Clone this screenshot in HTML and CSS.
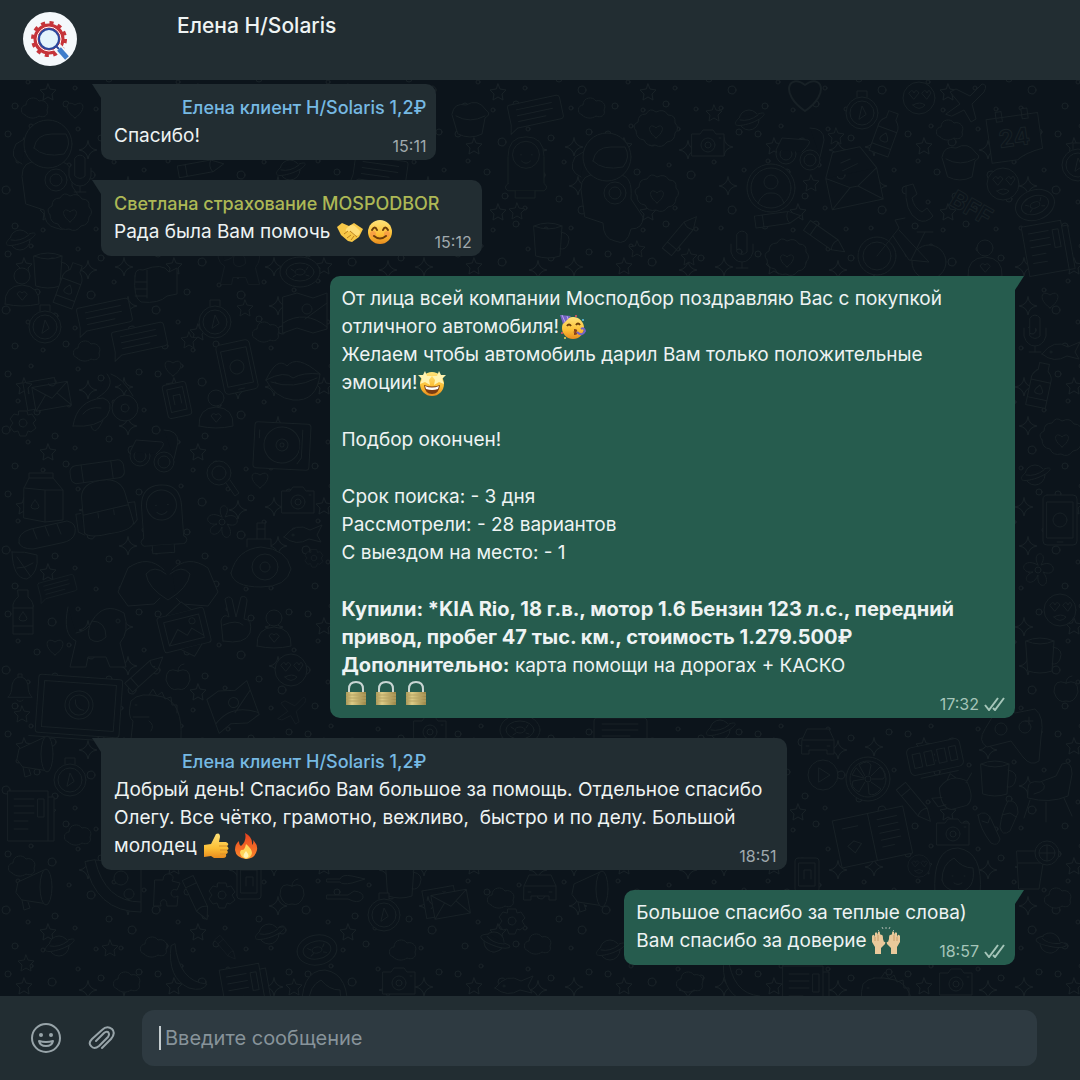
FILE: index.html
```html
<!DOCTYPE html>
<html lang="ru">
<head>
<meta charset="utf-8">
<meta name="viewport" content="width=device-width, initial-scale=1">
<title>Елена H/Solaris</title>
<link rel="stylesheet" href="styles.css">
</head>
<body>
<svg class="defs" aria-hidden="true">
  <defs>
    <!-- wallpaper doodles, each centred on 0,0 -->
    <g id="star"><path d="M0-8 2-3 8-2 4 2 5 8 0 5-5 8-4 2-8-2-2-3Z"/></g>
    <g id="spark"><path d="M0-9Q1-1 9 0 1 1 0 9-1 1-9 0-1-1 0-9Z"/></g>
    <g id="cloud"><path d="M-10 7C-16 5-14-3-9-3-9-11 1-12 4-7 10-9 15-3 12 2 14 8 8 10 4 8 0 11-6 11-10 7Z"/></g>
    <g id="heart"><path d="M0 8C-13-1-8-11 0-5 8-11 13-1 0 8Z"/></g>
    <g id="planet"><circle r="10"/><path d="M-9-3C-20 7-10 7 2 3 16-2 20-10 9-6M-9 0Q0 2 9-5"/></g>
    <g id="chat"><path d="M-24-12H24Q27-12 27-9V9Q27 12 24 12H-20L-28 17-26 8V-9Q-26-12-24-12ZM-18-6H18M-18 0H18M-18 6H10"/></g>
    <g id="face"><circle r="16"/><path d="M-10-5Q-7-10-5-5-3-10 0-5L-5 1ZM3-5Q6-10 8-5 10-10 12-5L8 1ZM-6 7Q1 3 6 7 0 14-6 7Z"/></g>
    <g id="camera"><path d="M-16-9H-8L-5-13H5L8-9H16V13H-16Z"/><circle cy="2" r="7"/><circle cy="2" r="3"/><path d="M11-5h2"/></g>
    <g id="cookie"><path d="M-20 0q-5-6 2-9 0-8 8-8 4-7 10-2 8-4 12 3 8 0 7 8 5 5 0 10 0 8-8 9-5 7-12 3-8 2-11-5-8-1-8-9Z"/><path d="M0 7C-11-1-6-9 0-3 6-9 11-1 0 7Z"/></g>
    <g id="gear"><path d="M-4-12H4L5-8 9-9 13-3 10 0 13 5 8 9 5 8 3 13H-3L-5 8-9 9-13 4-10 0-13-4-9-9-5-8Z"/><circle r="4"/></g>
    <g id="flower"><path d="M0-5C-8-20 12-20 3-5 18-12 20 8 5 2 16 16-2 22 0 5-6 20-20 8-5 2-20 4-16-14 0-5Z"/><circle r="3"/></g>
    <g id="bino"><circle cx="-12" cy="6" r="10"/><circle cx="12" cy="12" r="10"/><circle cx="-12" cy="6" r="6"/><circle cx="12" cy="12" r="6"/><path d="M-22 2-16-10 10-8Q15-6 4 4M12-20Q26-20 26-8L22 9"/></g>
    <g id="watch"><path d="M-5-16V-22H5V-16"/><circle r="16"/><circle r="12"/><path d="M-3 6 0-7 4 1Z"/></g>
    <g id="bottle"><path d="M-5-22H5V-15Q11-10 10-4V22H-10V-4Q-11-10-5-15ZM-10-4H10M-10 14H10"/><path d="M0 0Q8 9 0 9-8 9 0 0Z"/></g>
    <g id="plane"><path d="M-20 12-6 2-16-10-10-13 4-6 16-18Q22-18 18-10L6 2 10 17 5 20-2 8-14 14Z"/></g>
    <g id="calendar"><path d="M-26-16H26V20Q8 22 0 28H-26ZM-16-22h6v10h-6ZM10-22h6v10h-6Z"/><text class="doodle-text" x="-16" y="14">24</text></g>
    <g id="astro"><path d="M-26 6Q-40 0-32-14L-22-20"/><path d="M-26 18Q-26 2-10 4H12Q26 4 24 28L36 46Q36 58 24 58 20 76 8 70-4 68-4 52L-22 46Z"/><circle cy="-14" r="24"/><path d="M-14-10Q-12-24 4-24H18Q24-14 16-4-4 0-14-10Z"/><circle cx="8" cy="22" r="11"/><circle cx="8" cy="22" r="6"/></g>
    <g id="person-circle"><circle r="24"/><circle r="20"/><circle cy="-6" r="7"/><path d="M-13 15Q-8 4 0 5 9 4 13 15"/></g>
    <g id="mail"><path d="M-22-14H10V-8M-22-14V14H-14"/><path d="M-14-8H22V16H-14ZM-14-8 4 6 22-8M-14 16-2 2M22 16 10 2"/></g>
    <g id="letter"><path d="M-26-4-14-28H14L26-4V28H-26ZM-26-4-4 10H4L26-4M-26 28-4 10M26 28 4 10M-8-16 2-18M-8-8 8-12"/></g>
    <g id="muffin"><path d="M-18-6Q-16-18-4-15 8-22 16-10 22-6 15-2L12 14Q0 20-12 14ZM-14-4Q0 4 15-4"/></g>
    <g id="handset"><path d="M-12-16-5-18-1-8-6-4Q-4 6 4 10L9 6 15 14Q8 22 0 18-14 10-12-16Z"/></g>
    <g id="donut"><ellipse rx="20" ry="15"/><ellipse rx="14" ry="9"/><ellipse rx="5" ry="3"/><path d="M-9-3l3 2M8-5l-2 3M9 4l-3-1M-7 5l3-2"/></g>
    <g id="pencil"><path d="M-22-6H12L24 0 12 6H-22ZM-14-6V6M12-6Q8 0 12 6"/></g>
    <g id="mic"><path d="M-5-12Q0-18 5-12V6Q0 11-5 6ZM-11-2V6Q-8 16 0 16 8 16 11 6V-2M0 16V22M-6 22H6"/></g>
    <g id="bike"><circle cx="-26" cy="10" r="19"/><circle cx="26" cy="16" r="17"/><circle cx="-26" cy="10" r="14"/><path d="M-26 10-4-18-8-26 2-28M-4-16 26 16 6 14-10-10M14-14H30M22-14 8 14"/></g>
    <g id="news"><path d="M-22-24H18V-18H24V26H-22ZM18-18V26M-16-16H4M-16-9H4M-16-2H4M-16 6H-2M-16 14H-2M8-16h6v18H8Z"/></g>
    <g id="mug"><path d="M-14-14Q0-20 14-14L12 16Q0 20-12 16ZM-14-14Q0-8 14-14M13-8Q24-6 20 4 18 10 12 9"/></g>
    <g id="map"><path d="M-22-16-8-20 8-15 22-20V16L8 20-8 15-22 20ZM-22 10Q0-4 22 14M0 6 22-10"/><circle cx="2" cy="-4" r="5"/></g>
    <g id="tablet"><rect x="-17" y="-25" width="34" height="50" rx="4"/><path d="M-13-18H13V18H-13ZM-3 22H3"/><circle r="7"/></g>
    <g id="phone"><rect x="-12" y="-17" width="24" height="34" rx="3"/><path d="M-8-12H8V11H-8ZM-3 4V-5H4V4"/></g>
    <g id="lips"><path d="M-27 2Q-16-22-6-12 4-24 27-4 24 24 0 22-18 20-27 2ZM-27 2Q-8-8 0 0 10-6 27-4M-22 4Q0 12 24 0"/></g>
    <g id="ufo"><path d="M-20 14Q-16-12 10-14 22-10 14 4 4 16-20 14ZM-10 2Q-4-6 8-4M-2 14Q2 26 10 8"/><circle cx="32" cy="-4" r="13"/><circle cx="32" cy="-4" r="4"/><path d="M4-14Q24-26 14-38M40-16Q30-34 18-38"/></g>
    <g id="person"><circle cy="-14" r="8"/><path d="M-17 14Q-18-4 0-5 18-4 17 14Q0 18-17 14ZM0 10-5 4Q-3 0 0 3 3 0 5 4Z"/></g>
    <g id="deck"><rect x="-28" y="-22" width="56" height="46" rx="3"/><circle r="18"/><circle r="6"/><circle r="2"/><path d="M20-16V12L16 18M-23-14v8"/></g>
    <g id="lens"><circle r="12"/><circle r="7"/><path d="M7 10 16 23 20 20 11 7"/></g>
    <g id="milk"><path d="M-19-10-14-20H10L20-8V22L2 24-19 20ZM-19-10 2-8 20-8M2-8V24M-14-20V-25H10V-20"/><path d="M-8 2Q0 11-8 11-16 11-8 2Z"/></g>
    <g id="bag"><path d="M-22-12Q-20-26 0-26 20-26 22-8L26 20Q24 28 0 28-20 30-24 24ZM-25 4H-30V22L-24 26M23 0H30V18L26 22M-23 6 23 2M-8 6v5M8 5v5"/><rect x="-30" y="-44" width="54" height="18" rx="6"/><path d="M-18-44V-26M12-44V-26"/></g>
    <g id="girl"><path d="M-20 24V-6Q-20-28 0-28 20-28 20-6V24Q26 28 20 32H-20Q-26 28-20 24Z"/><circle cy="-8" r="15"/><path d="M-6-8h1M6-8h1M-5-1Q0 4 5-1M-12 32V40H10V32"/></g>
    <g id="dial"><path d="M-30 10Q-24-14 0-16 26-14 30 6 26 24 0 24-28 24-30 10ZM-14-16V-24H10V-16M-4-24V-40H4V-24M-4-34H4"/><circle cx="4" cy="4" r="13"/><circle cx="4" cy="4" r="5"/></g>
    <g id="fish"><path d="M-18 4Q-6-12 8-3L20-8 15 2 19 9 7 6Q-6 14-18 4Z"/><circle cx="-9" cy="2" r="1"/></g>
    <g id="bread"><path d="M-28 8Q-30-2-16-6L20-14Q30-12 28-2 26 6 14 8L-14 14Q-26 14-28 8ZM-14-6-10 4M-2-9 2 1M10-11 14-1"/></g>
    <g id="leaf"><path d="M-13-13Q0-14 12-10 14 8 2 14-12 14-13-13ZM-8-8 6 12M0 2 8-2M0 2-8 3"/></g>
    <g id="hands"><path d="M-2-8Q-14-18-22-8-20 6 0 18 20 6 22-8 14-18 2-8M-4-12Q-20-28-40-14L-50 10-40 24-14 22-8 16M4-12Q20-28 40-14L50 10 40 24 14 22 8 16"/></g>
    <g id="dog"><path d="M-30-28Q-36 0-22 6L-28 32H-12L-10 22H8L12 32H28L22 8Q32-4 26-22 6-34-6-14-10-4-22-2"/><path d="M-6-14Q8-14 8 2 0 10-8 4-12-4-6-14Z"/><circle cx="20" cy="-14" r="2"/></g>
    <g id="picture"><rect x="-24" y="-18" width="48" height="36" rx="3"/><path d="M-18-12H18V12H-18ZM-18 12-6-2 2 6 8 0 18 10M-14-18 4-28 12-18M-8 18 4 28 14 18"/><circle cx="10" cy="-7" r="3"/></g>
    <g id="peace"><path d="M-14 18-16-2Q-14-10-8-6L-12-24Q-8-28-5-24L-1-6 4-26Q10-28 10-22L7-4Q16-4 13 10 8 22-14 18ZM-14 2Q0-4 6 2"/></g>
    <g id="laptop"><rect x="-42" y="-28" width="84" height="58" rx="3"/><path d="M-36-22H36V24H-36ZM-48 34H48"/><circle r="14"/><circle r="10"/><path d="M-4-5Q-4 4 5 5"/></g>
    <g id="dino"><path d="M-22 26-20 8Q-26 4-22-12-14-22 10-16 30-10 28 26M-20 4H-4M-18-8h2M-4-18l4-6 4 7 5-4 3 7 6-2 1 8 5 0 0 8M-4 8Q2 12-2 18"/></g>
    <g id="apple"><path d="M0-7Q12-12 12 2 8 14 0 11-8 14-12 2-12-12 0-7ZM0-7Q0-13 6-14"/></g>
    <g id="bell"><path d="M-12 9Q-8 6-8-3-6-11 0-11 6-11 8-3 8 6 12 9ZM-3 12Q0 15 3 12M-2-11V-14H2V-11"/></g>
    <g id="car"><path d="M-16-2-11-13H11L16-2V12H9V8H-9V12H-16ZM-16-2H16M-12 4h3M9 4h3"/></g>
    <g id="play"><circle r="15"/><path d="M-4-7 7 0-4 7Z"/></g>
    <g id="citrus"><circle r="22"/><circle r="18"/><circle r="3"/><path d="M-3-3-9-14Q0-20 3-14L1-4M3-3 12-12Q20-4 15 0L4 0M3 3 13 10Q6 18 1 15L0 4M-3 3-9 13Q-18 8-15 2L-4 0M-4-1-16-4-12-11Z"/></g>
    <g id="clock"><rect x="-27" y="-14" width="54" height="28" rx="5"/><path d="M-18 18H20M-22-7h8v14h-8ZM-10-7h8v14h-8ZM3-7h8v14H3ZM15-7h7v14h-7ZM0-3v1M0 3v1"/></g>
    <g id="pad"><path d="M-20-24Q-10-30 0-24L20-28Q30-20 26 0L24 24Q16 30 8 20L-4 4-28 10Q-38 4-30-8Z"/><circle cx="-14" cy="-8" r="6"/><circle cx="10" cy="-10" r="6"/><path d="M14-20v8M10-16h8"/></g>
    <g id="pot"><path d="M-14-8Q0-20 14-8 18 12 8 16H-8Q-18 12-14-8ZM-14 2-24 0-20 10-12 10M13-6 21-14M-4-14 0-19 4-14"/></g>
    <g id="chair"><path d="M-22-2Q-22-10-10-8L6-14 12-26Q22-30 22-16L18 6Q0 14-22 8ZM-20 10-26 28M-4 12V32M14 8 22 26M-8-8Q0 0-16 4"/></g>
    <g id="book"><path d="M-36-22H0V26H-36ZM0-22H36V26H0ZM-28-12H-12M8-14H28M8-7H28M8 0H28M8 7H28M8 14H20"/><path d="M-20 14-26 6-19 2-12 6Z"/></g>
    <g id="flips"><path d="M-20-8Q-12-14-7-4L2 16Q0 24-7 20-18 6-20-8ZM-16-2-10 0-8-6M10-22Q20-24 20-10L12 8Q4 14 2 4 4-12 10-22ZM4-8 12-10 18-6"/></g>
    <g id="drink"><path d="M-16-14H12L6 24H-14ZM-15-2H10"/><circle cx="14" cy="-12" r="12"/><circle cx="14" cy="-12" r="8"/><path d="M6-12H22M14-20V-4"/></g>
    <g id="lady"><path d="M-23 22Q-26-24 0-24 26-20 22 22M-16 8Q-16-8-4-14 4-4 15-4 18 18 0 20-14 18-16 8ZM-6 4h1M6 4h1M-4 11Q0 14 4 11"/></g>
    <g id="horn"><path d="M-18 4-16-6 10-18 14 16-12 12ZM-12 12-10 22-4 20-6 14"/><ellipse cx="12" cy="-1" rx="6" ry="18"/></g>
    <g id="pizza"><path d="M-30-26Q-20 24 26 24V14Q-10 14-20-28ZM-20-28 26-24V14"/><circle cx="6" cy="-10" r="7"/><circle cx="14" cy="6" r="5"/></g>
    <g id="puzzle"><path d="M-12-12H-4Q-4-19 3-18 8-16 5-11L13-9 10-2Q4-4 4 2 6 7 11 4L10 14H0Q0 6-5 8-8 10-6 14H-13Z"/></g>
    <g id="fork"><path d="M-19-9H-6Q-4-14 6-12L19-9 6-5Q-4-3-6-6H-19ZM-19 7H2L8 3Q18 4 17 10 14 15 7 13L2 11H-19Z"/></g>
    <g id="banana"><path d="M-14-24Q-10 14 18 16 14 24 0 20-22 10-18-22Z"/></g>
    <g id="fist"><path d="M-20-8Q-20-16-12-14 8-22 14-12L22-16V10L12 12Q4 20-14 18-22 14-20-8ZM-20-2H-8M-20 5H-8M-20 12H-8M-8-14V14"/></g>

    <pattern id="specks" width="150" height="120" patternUnits="userSpaceOnUse">
      <g class="doodle">
        <circle cx="8" cy="14" r="3"/><circle cx="31" cy="6" r="2"/><circle cx="52" cy="22" r="4"/><circle cx="78" cy="9" r="2"/><circle cx="101" cy="18" r="3"/><circle cx="139" cy="12" r="3"/>
        <circle cx="18" cy="41" r="2"/><circle cx="37" cy="52" r="3"/><circle cx="69" cy="45" r="2"/><circle cx="91" cy="55" r="4"/><circle cx="114" cy="42" r="2"/><circle cx="144" cy="50" r="2"/>
        <circle cx="6" cy="70" r="4"/><circle cx="28" cy="82" r="2"/><circle cx="55" cy="76" r="3"/><circle cx="75" cy="88" r="2"/><circle cx="109" cy="79" r="3"/><circle cx="132" cy="90" r="4"/>
        <circle cx="15" cy="106" r="3"/><circle cx="43" cy="110" r="2"/><circle cx="66" cy="104" r="3"/><circle cx="96" cy="109" r="2"/><circle cx="121" cy="108" r="2"/>
        <use href="#spark" x="124" y="27"/><use href="#star" x="48" y="92"/><use href="#spark" x="88" y="30"/><use href="#star" x="24" y="26"/><use href="#spark" x="128" y="66"/>
      </g>
    </pattern>

    <g id="ticks"><path d="M1 8 5 13 14 1M9 11 11 13 20 1"/></g>
    <linearGradient id="skin" x1="0" y1="0" x2="0" y2="1"><stop offset="0" stop-color="#ffe37a"/><stop offset=".6" stop-color="#fcbf35"/><stop offset="1" stop-color="#e88b1e"/></linearGradient>
    <linearGradient id="brass" x1="0" x2="1"><stop offset="0" stop-color="#a89658"/><stop offset=".3" stop-color="#dccb86"/><stop offset="1" stop-color="#9b8648"/></linearGradient>
    <linearGradient id="flame" x1="0" y1="0" x2="0" y2="1"><stop offset="0" stop-color="#e8401f"/><stop offset="1" stop-color="#fb8a2c"/></linearGradient>
    <g id="lock"><path d="M7 13V9Q7 2 14 2T21 9V13" fill="none" stroke="#c9d6d4" stroke-width="2"/><path d="M4 12H24V25H4Z" fill="url(#brass)"/><path d="M4 15H24M4 18H24M4 21H24" stroke="#b7a465"/></g>
  </defs>
</svg>

<header class="header">
  <svg class="avatar" viewBox="0 0 54 54" role="img" aria-label="Логотип">
    <circle cx="27" cy="27" r="27" fill="#f4f8fb"/>
    <circle cx="26" cy="27" r="13" fill="none" stroke="#c6343a" stroke-width="5"/>
    <circle cx="26" cy="27" r="16" fill="none" stroke="#c6343a" stroke-width="4" stroke-dasharray="4 4.38"/>
    <path d="M34 35 43 45" stroke="#f4f8fb" stroke-width="9"/>
    <circle cx="26" cy="27" r="10" fill="#e4f3fc" stroke="#2b479d" stroke-width="2"/>
    <circle cx="26" cy="27" r="12" fill="none" stroke="#fff"/>
    <path d="M33 34 36 37" stroke="#2b479d" stroke-width="2"/>
    <path d="M36 37 44 46" stroke="#3f7dcb" stroke-width="5"/>
  </svg>
  <h1 class="title">Елена H/Solaris</h1>
</header>

<main class="chat">
  <svg class="wallpaper" viewBox="0 80 1080 916" preserveAspectRatio="xMidYMid slice" aria-hidden="true">
    <rect y="80" width="1080" height="916" fill="url(#specks)"/>
    <g class="doodle">
      <use href="#cloud" x="35" y="108"/><use href="#astro" x="48" y="158"/><use href="#cookie" x="70" y="215"/><use href="#planet" x="20" y="240"/><use href="#mug" x="48" y="270"/>
      <use href="#heart" x="75" y="110"/><use href="#mic" x="80" y="170"/>
      <use href="#pencil" transform="translate(200 168) rotate(-10)"/><use href="#planet" x="290" y="170"/><use href="#chat" transform="translate(380 170) rotate(8)"/><use href="#fist" x="155" y="284"/><use href="#person" x="22" y="290"/><use href="#dog" transform="translate(240 262) scale(.7)"/><use href="#donut" x="300" y="272"/><use href="#bottle" transform="translate(70 285) rotate(20)"/>
      <use href="#chat" transform="translate(535 112) rotate(-12)"/><use href="#cloud" x="592" y="108"/><use href="#cookie" x="656" y="131"/><use href="#camera" x="708" y="143"/><use href="#planet" x="749" y="120"/><use href="#heart" transform="translate(805 95) scale(2)"/><use href="#bino" x="798" y="148"/><use href="#watch" x="862" y="113"/><use href="#bottle" transform="translate(886 133) rotate(20)"/><use href="#face" x="919" y="98"/><use href="#plane" x="966" y="102"/><use href="#calendar" transform="translate(1014 132) rotate(-8)"/><use href="#cloud" x="950" y="130"/>
      <use href="#star" x="714" y="113"/><use href="#star" x="836" y="136"/><use href="#star" x="811" y="183"/><use href="#star" x="517" y="211"/><use href="#star" x="689" y="257"/><use href="#star" x="637" y="249"/>
      <use href="#muffin" x="470" y="120"/><use href="#girl" transform="translate(526 162) scale(.9)"/><use href="#astro" x="607" y="171"/><use href="#cookie" x="657" y="196"/><use href="#person-circle" x="771" y="188"/><use href="#letter" transform="translate(852 177) rotate(-12)"/><use href="#muffin" x="960" y="163"/><use href="#face" x="1003" y="184"/><use href="#handset" x="918" y="202"/><use href="#donut" transform="translate(1035 205) rotate(-20)"/><text class="doodle-text" transform="translate(948 204) rotate(30)">BFF</text>
      <use href="#pencil" transform="translate(777 219) rotate(-8)"/><use href="#pencil" transform="translate(681 235) rotate(-50)"/><use href="#pencil" transform="translate(825 238) rotate(35)"/><use href="#mic" x="742" y="246"/><use href="#bike" x="903" y="246"/><use href="#news" transform="translate(1047 247) rotate(-10)"/><use href="#mug" x="548" y="240"/><use href="#person" x="985" y="262"/><use href="#cookie" x="787" y="260"/><use href="#watch" x="1078" y="165"/>

      <use href="#watch" x="45" y="327"/><use href="#chat" transform="translate(104 315) rotate(-12)"/><use href="#chat" transform="translate(139 339) rotate(-12)"/><use href="#watch" x="215" y="322"/><use href="#map" x="305" y="313"/><use href="#cloud" x="266" y="332"/><use href="#cloud" x="87" y="351"/><use href="#tablet" transform="translate(237 367) rotate(-12)"/><use href="#lips" x="293" y="378"/><use href="#mail" transform="translate(47 393) rotate(-10)"/><use href="#ufo" x="93" y="412"/><use href="#phone" transform="translate(177 400) rotate(-12)"/><use href="#person" x="216" y="412"/><use href="#gear" x="23" y="423"/><use href="#bino" x="152" y="450"/><use href="#deck" transform="translate(282 445) rotate(3)"/><use href="#lens" x="219" y="473"/><use href="#milk" x="43" y="498"/><use href="#bag" transform="translate(105 506) rotate(-8)"/><use href="#girl" transform="translate(162 513) rotate(-4)"/><use href="#flower" x="222" y="522"/><use href="#dial" x="261" y="563"/><use href="#fish" x="302" y="533"/><use href="#bread" x="47" y="535"/><use href="#leaf" x="25" y="565"/><use href="#hands" x="168" y="582"/><use href="#chat" transform="translate(57 587) rotate(-15) scale(.7)"/><use href="#bottle" x="23" y="612"/><use href="#dog" x="98" y="635"/><use href="#picture" transform="translate(184 630) rotate(-14)"/><use href="#peace" x="237" y="623"/><use href="#person" x="274" y="632"/><use href="#face" x="291" y="670"/><use href="#laptop" transform="translate(79 705) rotate(4)"/><use href="#dino" x="153" y="713"/><use href="#apple" x="178" y="678"/><use href="#pencil" transform="translate(145 673) rotate(-42)"/><use href="#map" transform="translate(233 707) rotate(-20)"/><use href="#bell" x="20" y="688"/><use href="#plane" transform="translate(292 710) scale(.7)"/><use href="#star" x="22" y="714"/><use href="#star" x="189" y="340"/><use href="#star" x="245" y="308"/><use href="#heart" x="260" y="480"/><use href="#heart" x="173" y="368"/><use href="#heart" x="55" y="647"/><use href="#camera" x="298" y="500"/><use href="#gear" transform="translate(314 558) scale(.7)"/>

      <use href="#heart" x="1050" y="300"/><use href="#mic" x="1035" y="330"/><use href="#fish" x="1060" y="350"/><use href="#bottle" transform="translate(1040 385) rotate(12)"/><use href="#cookie" x="1062" y="440"/><use href="#planet" x="1035" y="475"/><use href="#tablet" x="1060" y="520"/><use href="#flower" x="1038" y="570"/><use href="#face" x="1060" y="610"/><use href="#mug" x="1040" y="655"/><use href="#apple" x="1066" y="690"/>

      <use href="#horn" x="35" y="755"/><use href="#watch" x="70" y="780"/><use href="#news" x="30" y="815"/><use href="#cloud" x="78" y="835"/><use href="#cloud" x="22" y="866"/><use href="#camera" x="430" y="730"/><use href="#donut" x="520" y="730"/><use href="#chat" x="620" y="730"/><use href="#planet" x="720" y="730"/>
      <use href="#car" x="818" y="742"/><use href="#play" x="823" y="775"/><use href="#citrus" x="868" y="779"/><use href="#clock" transform="translate(935 757) rotate(-12)"/><use href="#pad" x="1015" y="737"/><use href="#pot" transform="translate(955 792) rotate(-15)"/><use href="#mug" x="995" y="778"/><use href="#chair" x="1050" y="790"/><use href="#book" transform="translate(872 835) rotate(-12)"/><use href="#pencil" transform="translate(915 803) rotate(50)"/><use href="#camera" x="953" y="832"/><use href="#flips" x="998" y="823"/><use href="#drink" x="1033" y="865"/><use href="#face" transform="translate(919 866) scale(.7)"/><use href="#lady" x="958" y="872"/><use href="#phone" x="807" y="875"/><use href="#cloud" x="1058" y="898"/><use href="#planet" transform="translate(1050 943) rotate(30)"/><use href="#news" x="805" y="990"/><use href="#camera" x="956" y="982"/><use href="#dino" x="885" y="996"/>
      <use href="#horn" x="34" y="888"/><use href="#pizza" x="115" y="888"/><use href="#puzzle" x="167" y="892"/><use href="#pencil" transform="translate(197 898) rotate(65)"/><use href="#gear" x="222" y="895"/><use href="#phone" x="249" y="882"/><use href="#apple" x="292" y="893"/><use href="#fork" x="346" y="888"/><use href="#mug" x="400" y="880"/><use href="#mail" transform="translate(446 901) rotate(-10)"/><use href="#cloud" x="501" y="898"/><use href="#car" x="540" y="888"/><use href="#horn" x="590" y="890"/><use href="#watch" x="384" y="915"/><use href="#planet" x="59" y="946"/><use href="#star" x="110" y="948"/><use href="#cloud" x="154" y="947"/><use href="#banana" x="189" y="968"/><use href="#pencil" transform="translate(226 948) rotate(50) scale(.6)"/><use href="#planet" x="269" y="934"/><use href="#donut" transform="translate(317 950) rotate(-10)"/><use href="#cloud" x="403" y="950"/><use href="#planet" transform="translate(494 942) rotate(40)"/><use href="#cloud" x="538" y="944"/><use href="#gear" x="512" y="921"/><use href="#news" transform="translate(245 990) rotate(-10)"/><use href="#lady" x="325" y="994"/><use href="#camera" x="399" y="981"/><use href="#fish" x="513" y="984"/><use href="#cloud" x="127" y="982"/><use href="#star" x="26" y="963"/><use href="#star" x="294" y="987"/><use href="#planet" x="610" y="950"/><use href="#cloud" x="690" y="982"/><use href="#banana" x="742" y="980"/>
    </g>
  </svg>

  <article class="message incoming">
    <h2 class="author blue indented">Елена клиент H/Solaris 1,2₽</h2>
    <p class="text">Спасибо!</p>
    <footer class="meta"><time>15:11</time></footer>
  </article>

  <article class="message incoming">
    <h2 class="author olive">Светлана страхование MOSPODBOR</h2>
    <p class="text spaced">Рада была Вам помочь <svg class="emoji" viewBox="0 0 28 28" role="img" aria-label="рукопожатие"><path d="M1 9 6 5 13 8 18 5 27 11 23 19 16 24 12 23 5 17Z" fill="#f7c747"/><path d="M12 9Q16 5 20 9L24 13Q24 19 18 17L14 13 11 14Q8 12 12 9Z" fill="#ffdd76"/><path d="M12 13 8 16M15 17 11 20M18 18 15 22M14 13 21 19" stroke="#bd821c" fill="none"/></svg><svg class="emoji" viewBox="0 0 28 28" role="img" aria-label="улыбка"><circle cx="14" cy="14" r="12" fill="url(#skin)"/><circle cx="7" cy="16" r="3" fill="#f58b4a" opacity=".6"/><circle cx="21" cy="16" r="3" fill="#f58b4a" opacity=".6"/><path d="M6 12Q9 7 11 12M17 12Q19 7 22 12M8 18Q14 23 20 18" fill="none" stroke="#6b3d0a" stroke-width="2" stroke-linecap="round"/></svg></p>
    <footer class="meta"><time>15:12</time></footer>
  </article>

  <article class="message outgoing wide">
    <p class="text">От лица всей компании Мосподбор поздравляю Вас с покупкой<br>отличного автомобиля!<svg class="emoji" viewBox="0 0 28 28" role="img" aria-label="праздник"><circle cx="14" cy="15" r="11" fill="url(#skin)"/><path d="M1 2 12 3 4 11Z" fill="#7663c5"/><path d="M3 2 6 9M8 3 9 6" stroke="#b7a6ec"/><path d="M8 13Q10 10 12 13M17 12Q19 9 21 12" fill="none" stroke="#6b3d0a" stroke-width="2"/><path d="M15 17Q19 17 16 19 19 21 15 21" fill="none" stroke="#8a431a" stroke-width="2"/><path d="M18 19Q23 24 26 18 25 14 22 16" fill="none" stroke="#7663c5" stroke-width="2"/><circle cx="17" cy="3" r="1" fill="#ef5664"/><circle cx="24" cy="7" r="1" fill="#60c3ed"/><circle cx="3" cy="20" r="1" fill="#ef5664"/><circle cx="6" cy="25" r="1" fill="#efd85d"/></svg><br>Желаем чтобы автомобиль дарил Вам только положительные<br>эмоции!<svg class="emoji" viewBox="0 0 28 28" role="img" aria-label="восторг"><circle cx="14" cy="15" r="12" fill="url(#skin)"/><path d="M7 2 9 7 14 7 11 11 12 16 7 13 2 15 4 10 0 6 5 6ZM21 2 23 6 28 6 24 10 26 15 21 13 16 16 17 11 14 7 19 7Z" fill="#fff3b0"/><path d="M6 16Q14 19 22 16 21 25 14 25 7 25 6 16Z" fill="#7b3c12"/><path d="M7 17Q14 20 21 17L20 20Q14 22 8 20Z" fill="#fff"/></svg></p>
    <p class="text">Подбор окончен!</p>
    <p class="text">Срок поиска: - 3 дня<br>Рассмотрели: - 28 вариантов<br>С выездом на место: - 1</p>
    <p class="text"><b>Купили: *KIA Rio, 18 г.в., мотор 1.6 Бензин 123 л.с., передний<br>привод, пробег 47 тыс. км., стоимость 1.279.500₽<br>Дополнительно:</b> карта помощи на дорогах + КАСКО<br><svg class="emoji" viewBox="0 0 28 28" role="img" aria-label="замок"><use href="#lock"/></svg><svg class="emoji" viewBox="0 0 28 28" role="img" aria-label="замок"><use href="#lock"/></svg><svg class="emoji" viewBox="0 0 28 28" role="img" aria-label="замок"><use href="#lock"/></svg></p>
    <footer class="meta"><time>17:32</time><svg class="ticks" viewBox="0 0 21 14" role="img" aria-label="Доставлено"><use href="#ticks"/></svg></footer>
  </article>

  <article class="message incoming wide">
    <h2 class="author blue indented">Елена клиент H/Solaris 1,2₽</h2>
    <p class="text">Добрый день! Спасибо Вам большое за помощь. Отдельное спасибо<br>Олегу. Все чётко, грамотно, вежливо,&nbsp; быстро и по делу. Большой<br>молодец <svg class="emoji" viewBox="0 0 28 28" role="img" aria-label="палец вверх"><path d="M2 13 9 12 14 2Q18 0 18 5L17 10H24Q28 12 25 14 28 17 25 18 27 21 24 22 25 26 21 26H12L9 24 2 25Z" fill="url(#skin)"/><path d="M17 14H25M18 18H25M18 22H24" stroke="#d8912a"/></svg><svg class="emoji" viewBox="0 0 28 28" role="img" aria-label="огонь"><path d="M13 1Q21 5 20 13 22 11 21 8 26 13 25 18 23 27 14 27 4 26 3 18 3 12 7 9 7 13 9 14 15 9 13 1Z" fill="url(#flame)"/><path d="M14 12Q20 17 20 21 19 26 14 27 8 25 8 20 9 17 11 18 13 17 14 12Z" fill="#ffd65a"/><path d="M14 19Q19 25 14 26 9 25 14 19Z" fill="#fff4b5"/></svg></p>
    <footer class="meta"><time>18:51</time></footer>
  </article>

  <article class="message outgoing">
    <p class="text spaced">Большое спасибо за теплые слова)<br>Вам спасибо за доверие <svg class="emoji" viewBox="0 0 28 28" role="img" aria-label="поднятые руки"><path id="palm" d="M3 27V20L0 15V9Q2 6 3 10V6Q5 4 6 8V5Q8 3 8 7L9 8Q11 7 11 12L12 15Q14 14 13 17L9 21V27Z" fill="#eac99b"/><use href="#palm" transform="matrix(-1 0 0 1 28 0)"/><path d="M3 10V14M6 8V14M25 10V14M22 8V14" stroke="#c89c6b"/><path d="M6 3 7 4M10 0 11 2M14 0V2M18 0 17 2M22 3 21 4" stroke="#a9b5ad"/></svg></p>
    <footer class="meta"><time>18:57</time><svg class="ticks" viewBox="0 0 21 14" role="img" aria-label="Доставлено"><use href="#ticks"/></svg></footer>
  </article>
</main>

<form class="composer">
  <button class="tool" type="button" aria-label="Эмодзи"><svg width="32" height="32" viewBox="0 0 32 32"><circle cx="16" cy="16" r="14"/><circle class="solid" cx="11" cy="13" r="2"/><circle class="solid" cx="21" cy="13" r="2"/><path d="M9 19Q16 21 23 19 22 24 16 24 10 24 9 19Z"/></svg></button>
  <button class="tool" type="button" aria-label="Прикрепить"><svg width="28" height="28" viewBox="0 0 28 28"><path d="M14 24 23 15Q28 9 24 5 19 1 14 6L4 15Q0 19 3 22 6 26 11 22L20 13Q22 10 20 8 18 7 16 9L8 17"/></svg></button>
  <label class="field"><span class="caret"></span><input class="input" type="text" placeholder="Введите сообщение" aria-label="Введите сообщение"></label>
</form>
</body>
</html>
```

FILE: styles.css
```css
* { box-sizing: border-box; }

body {
  margin: 0;
  min-height: 100vh;
  display: flex;
  flex-direction: column;
  background: #0c141b;
  color: #eef3f3;
  font: 19px/28px Inter, "Noto Sans", sans-serif;
}

h1, h2, p { margin: 0; }
b { font-size: 20px; line-height: 24px; }

.defs { position: absolute; width: 0; height: 0; }

.header {
  display: flex;
  align-items: flex-start;
  gap: 100px;
  min-height: 80px;
  padding: 12px 23px;
  background: #222d32;
}
.avatar { width: 54px; height: 54px; }
.title { font-size: 21px; line-height: 28px; font-weight: 500; }

.chat {
  position: relative;
  flex: 1;
  display: flex;
  flex-direction: column;
  gap: 20px;
  padding: 4px 65px 30px 101px;
  overflow: hidden;
}
.wallpaper { position: absolute; inset: 0; width: 100%; height: 100%; }
.doodle {
  fill: #0c141b;
  stroke: #182126;
  stroke-width: 1px;
  stroke-linejoin: round;
  stroke-linecap: round;
}
.doodle-text { font-size: 24px; font-weight: 700; }

.message {
  position: relative;
  max-width: 75%;
  padding: 9px 10px 10px 13px;
  border-radius: 10px;
}
.wide { width: 75%; }
.message::before {
  content: "";
  position: absolute;
  top: 0;
  width: 18px;
  height: 14px;
  background: inherit;
}
.incoming { align-self: flex-start; background: #222d32; border-top-left-radius: 0; }
.incoming::before { left: -9px; clip-path: polygon(0 0, 100% 0, 100% 100%, 50% 100%); }
.outgoing { align-self: flex-end; padding-left: 12px; background: #265c4e; border-top-right-radius: 0; }
.outgoing::before { right: -9px; clip-path: polygon(0 0, 100% 0, 50% 100%, 0 100%); }

.author { font-size: 18px; line-height: 29px; font-weight: 500; }
.indented { margin-left: 68px; }
.blue { color: #76b9e3; }
.olive { color: #adb855; }

.text + .text { margin-top: 29px; }
.spaced::after { content: ""; display: inline-block; width: 76px; }
.outgoing .spaced::after { width: 103px; }
.emoji { width: 28px; height: 28px; margin-right: 2px; vertical-align: bottom; }

.meta {
  position: absolute;
  right: 10px;
  bottom: 4px;
  display: flex;
  align-items: center;
  gap: 5px;
  color: #a0a9ad;
  font-size: 16px;
  line-height: 20px;
}
.outgoing .meta { color: #a5c5b9; }
.ticks { width: 21px; height: 14px; fill: none; stroke: currentColor; stroke-width: 2px; }

.composer {
  display: flex;
  align-items: center;
  gap: 26px;
  padding: 14px 43px 14px 30px;
  background: #222d32;
}
.tool { display: flex; padding: 0; border: 0; background: none; }
.tool svg { fill: none; stroke: #98a4a9; stroke-width: 2px; stroke-linecap: round; stroke-linejoin: round; }
.tool .solid { fill: #98a4a9; stroke: none; }
.field {
  flex: 1;
  display: flex;
  align-items: center;
  gap: 4px;
  height: 56px;
  padding: 0 17px;
  border-radius: 12px;
  background: #2e3a41;
}
.caret { width: 2px; height: 24px; background: #c5cdd0; }
.input {
  flex: 1;
  min-width: 0;
  padding: 0;
  border: 0;
  outline: 0;
  background: none;
  color: inherit;
  font: inherit;
  font-size: 20px;
}
.input::placeholder { color: #87939a; opacity: 1; }
```
